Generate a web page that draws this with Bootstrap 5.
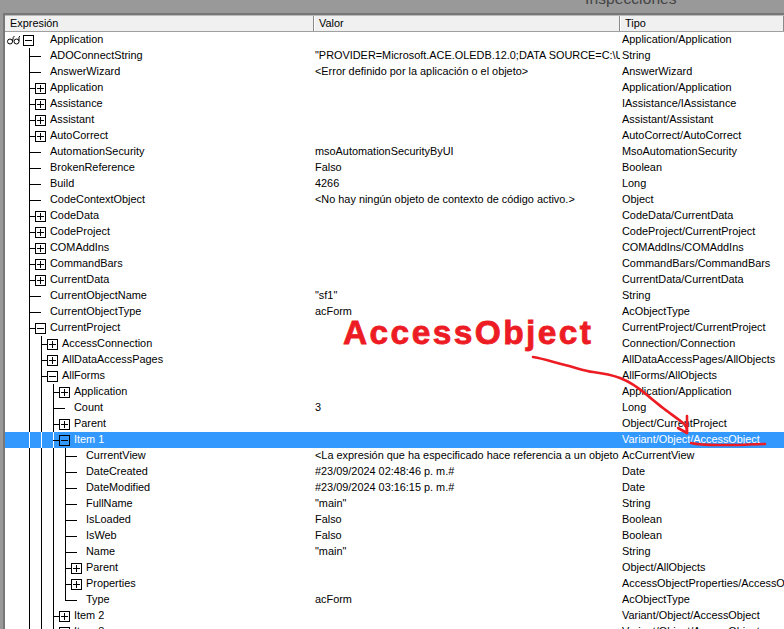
<!DOCTYPE html>
<html lang="es">
<head>
<meta charset="utf-8">
<title>Inspecciones</title>
<link href="https://cdn.jsdelivr.net/npm/bootstrap@5.3.0/dist/css/bootstrap.min.css" rel="stylesheet">
<style>
html,body{margin:0;background:#999;overflow:hidden}
.shot{width:784px;height:629px;font:10.9px/16px "Liberation Sans",Arial,sans-serif;color:#000}
.titlebar{height:13px;background:#999;flex:none;color:#444;font:15.5px/16px "Liberation Sans",sans-serif;padding-left:585px;letter-spacing:.1px}
.titlebar span{display:block;margin-top:-9px}
.pane{margin-left:3px;border-left:2px solid #777;border-top:2px solid #777;box-shadow:inset 0 1px 0 #bbb;padding-top:1px;background:#fff;min-height:0}
.head{height:16px;background:#f0f0f0;flex:none;border-bottom:1px solid #a0a0a0}
.hcell{height:15px;line-height:15px;padding-left:5px;border-right:1px solid #8a8a8a}
.hcell+.hcell{box-shadow:inset 1px 0 0 #fff}
.w1{width:309px;flex:none}.w2{width:306px;flex:none}.w3{flex:1 1 0;min-width:0}
.tr{height:16px;line-height:15px;flex:none;white-space:nowrap}
.v2{padding-left:1px;overflow:hidden}
.v3{padding-left:2px;overflow:hidden}
.sel{background:#3399ff;color:#fff}
.gap0{width:18px;flex:none}
.gd{width:12px;height:16px;flex:none;position:relative;display:block}
.gd::before{content:"";position:absolute;left:6px;top:0;bottom:0;width:1px;background:#000}
.sel .gd::before{background:#fff}
.el::after{content:"";position:absolute;left:6px;top:8px;width:6px;height:1px;background:#000}
.lst::before{bottom:8px}
.slot{width:15px;height:16px;flex:none;position:relative;display:block}
.lf::after{content:"";position:absolute;left:0;top:8px;width:6px;height:1px;background:#000}
.pb{position:absolute;left:0;top:3px;width:11px;height:11px;border:1px solid #000;background:#fff}
.pb::before{content:"";position:absolute;left:1px;right:1px;top:4px;height:1px;background:#000}
.pl::after{content:"";position:absolute;top:1px;bottom:1px;left:4px;width:1px;background:#000}
.sel .pb{background:#3399ff}
.rootslot{width:27px;height:16px;flex:none;position:relative;display:block}
.specs{position:absolute;left:2px;top:3px}
.mark-layer{position:absolute;left:0;top:0;pointer-events:none}
.note{position:absolute;left:343px;top:313px;font:700 33.5px/40px "Liberation Sans",Arial,sans-serif;color:#ed1c24;white-space:nowrap;letter-spacing:2.4px;-webkit-text-stroke:.8px #ed1c24}
</style>
</head>
<body>
<div class="shot d-flex flex-column position-relative overflow-hidden">
  <div class="titlebar overflow-hidden"><span>Inspecciones</span></div>
  <div class="pane flex-grow-1 overflow-hidden d-flex flex-column">
    <div class="head d-flex">
      <div class="hcell w1">Expresión</div>
      <div class="hcell w2">Valor</div>
      <div class="hcell w3">Tipo</div>
    </div>
    <div class="tr d-flex"><div class="w1 d-flex"><span class="gap0 position-relative"><svg class="specs" width="13" height="10" viewBox="0 0 13 10"><g fill="none" stroke="#000"><circle cx="3" cy="6.500" r="2.500"/><circle cx="9.500" cy="6.500" r="2.500"/><path d="M5.500 6.500Q6 1 7.500 1M12 6Q11.500 1 13 1"/></g></svg></span><span class="rootslot"><i class="pb"></i></span>Application</div><div class="w2 v2"></div><div class="w3 v3">Application/Application</div></div>
    <div class="tr d-flex"><div class="w1 d-flex"><i class="gap0"></i><i class="gd el"></i><span class="slot lf"></span>ADOConnectString</div><div class="w2 v2">"PROVIDER=Microsoft.ACE.OLEDB.12.0;DATA SOURCE=C:\Users\Usuario\Documents\main.accdb</div><div class="w3 v3">String</div></div>
    <div class="tr d-flex"><div class="w1 d-flex"><i class="gap0"></i><i class="gd el"></i><span class="slot lf"></span>AnswerWizard</div><div class="w2 v2">&lt;Error definido por la aplicación o el objeto&gt;</div><div class="w3 v3">AnswerWizard</div></div>
    <div class="tr d-flex"><div class="w1 d-flex"><i class="gap0"></i><i class="gd el"></i><span class="slot"><i class="pb pl"></i></span>Application</div><div class="w2 v2"></div><div class="w3 v3">Application/Application</div></div>
    <div class="tr d-flex"><div class="w1 d-flex"><i class="gap0"></i><i class="gd el"></i><span class="slot"><i class="pb pl"></i></span>Assistance</div><div class="w2 v2"></div><div class="w3 v3">IAssistance/IAssistance</div></div>
    <div class="tr d-flex"><div class="w1 d-flex"><i class="gap0"></i><i class="gd el"></i><span class="slot"><i class="pb pl"></i></span>Assistant</div><div class="w2 v2"></div><div class="w3 v3">Assistant/Assistant</div></div>
    <div class="tr d-flex"><div class="w1 d-flex"><i class="gap0"></i><i class="gd el"></i><span class="slot"><i class="pb pl"></i></span>AutoCorrect</div><div class="w2 v2"></div><div class="w3 v3">AutoCorrect/AutoCorrect</div></div>
    <div class="tr d-flex"><div class="w1 d-flex"><i class="gap0"></i><i class="gd el"></i><span class="slot lf"></span>AutomationSecurity</div><div class="w2 v2">msoAutomationSecurityByUI</div><div class="w3 v3">MsoAutomationSecurity</div></div>
    <div class="tr d-flex"><div class="w1 d-flex"><i class="gap0"></i><i class="gd el"></i><span class="slot lf"></span>BrokenReference</div><div class="w2 v2">Falso</div><div class="w3 v3">Boolean</div></div>
    <div class="tr d-flex"><div class="w1 d-flex"><i class="gap0"></i><i class="gd el"></i><span class="slot lf"></span>Build</div><div class="w2 v2">4266</div><div class="w3 v3">Long</div></div>
    <div class="tr d-flex"><div class="w1 d-flex"><i class="gap0"></i><i class="gd el"></i><span class="slot lf"></span>CodeContextObject</div><div class="w2 v2">&lt;No hay ningún objeto de contexto de código activo.&gt;</div><div class="w3 v3">Object</div></div>
    <div class="tr d-flex"><div class="w1 d-flex"><i class="gap0"></i><i class="gd el"></i><span class="slot"><i class="pb pl"></i></span>CodeData</div><div class="w2 v2"></div><div class="w3 v3">CodeData/CurrentData</div></div>
    <div class="tr d-flex"><div class="w1 d-flex"><i class="gap0"></i><i class="gd el"></i><span class="slot"><i class="pb pl"></i></span>CodeProject</div><div class="w2 v2"></div><div class="w3 v3">CodeProject/CurrentProject</div></div>
    <div class="tr d-flex"><div class="w1 d-flex"><i class="gap0"></i><i class="gd el"></i><span class="slot"><i class="pb pl"></i></span>COMAddIns</div><div class="w2 v2"></div><div class="w3 v3">COMAddIns/COMAddIns</div></div>
    <div class="tr d-flex"><div class="w1 d-flex"><i class="gap0"></i><i class="gd el"></i><span class="slot"><i class="pb pl"></i></span>CommandBars</div><div class="w2 v2"></div><div class="w3 v3">CommandBars/CommandBars</div></div>
    <div class="tr d-flex"><div class="w1 d-flex"><i class="gap0"></i><i class="gd el"></i><span class="slot"><i class="pb pl"></i></span>CurrentData</div><div class="w2 v2"></div><div class="w3 v3">CurrentData/CurrentData</div></div>
    <div class="tr d-flex"><div class="w1 d-flex"><i class="gap0"></i><i class="gd el"></i><span class="slot lf"></span>CurrentObjectName</div><div class="w2 v2">"sf1"</div><div class="w3 v3">String</div></div>
    <div class="tr d-flex"><div class="w1 d-flex"><i class="gap0"></i><i class="gd el"></i><span class="slot lf"></span>CurrentObjectType</div><div class="w2 v2">acForm</div><div class="w3 v3">AcObjectType</div></div>
    <div class="tr d-flex"><div class="w1 d-flex"><i class="gap0"></i><i class="gd el"></i><span class="slot"><i class="pb"></i></span>CurrentProject</div><div class="w2 v2"></div><div class="w3 v3">CurrentProject/CurrentProject</div></div>
    <div class="tr d-flex"><div class="w1 d-flex"><i class="gap0"></i><i class="gd"></i><i class="gd el"></i><span class="slot"><i class="pb pl"></i></span>AccessConnection</div><div class="w2 v2"></div><div class="w3 v3">Connection/Connection</div></div>
    <div class="tr d-flex"><div class="w1 d-flex"><i class="gap0"></i><i class="gd"></i><i class="gd el"></i><span class="slot"><i class="pb pl"></i></span>AllDataAccessPages</div><div class="w2 v2"></div><div class="w3 v3">AllDataAccessPages/AllObjects</div></div>
    <div class="tr d-flex"><div class="w1 d-flex"><i class="gap0"></i><i class="gd"></i><i class="gd el"></i><span class="slot"><i class="pb"></i></span>AllForms</div><div class="w2 v2"></div><div class="w3 v3">AllForms/AllObjects</div></div>
    <div class="tr d-flex"><div class="w1 d-flex"><i class="gap0"></i><i class="gd"></i><i class="gd"></i><i class="gd el"></i><span class="slot"><i class="pb pl"></i></span>Application</div><div class="w2 v2"></div><div class="w3 v3">Application/Application</div></div>
    <div class="tr d-flex"><div class="w1 d-flex"><i class="gap0"></i><i class="gd"></i><i class="gd"></i><i class="gd el"></i><span class="slot lf"></span>Count</div><div class="w2 v2">3</div><div class="w3 v3">Long</div></div>
    <div class="tr d-flex"><div class="w1 d-flex"><i class="gap0"></i><i class="gd"></i><i class="gd"></i><i class="gd el"></i><span class="slot"><i class="pb pl"></i></span>Parent</div><div class="w2 v2"></div><div class="w3 v3">Object/CurrentProject</div></div>
    <div class="tr d-flex sel"><div class="w1 d-flex"><i class="gap0"></i><i class="gd"></i><i class="gd"></i><i class="gd el"></i><span class="slot"><i class="pb"></i></span>Item 1</div><div class="w2 v2"></div><div class="w3 v3">Variant/Object/AccessObject</div></div>
    <div class="tr d-flex"><div class="w1 d-flex"><i class="gap0"></i><i class="gd"></i><i class="gd"></i><i class="gd"></i><i class="gd el"></i><span class="slot lf"></span>CurrentView</div><div class="w2 v2">&lt;La expresión que ha especificado hace referencia a un objeto cerrado o inexistente.&gt;</div><div class="w3 v3">AcCurrentView</div></div>
    <div class="tr d-flex"><div class="w1 d-flex"><i class="gap0"></i><i class="gd"></i><i class="gd"></i><i class="gd"></i><i class="gd el"></i><span class="slot lf"></span>DateCreated</div><div class="w2 v2">#23/09/2024 02:48:46 p. m.#</div><div class="w3 v3">Date</div></div>
    <div class="tr d-flex"><div class="w1 d-flex"><i class="gap0"></i><i class="gd"></i><i class="gd"></i><i class="gd"></i><i class="gd el"></i><span class="slot lf"></span>DateModified</div><div class="w2 v2">#23/09/2024 03:16:15 p. m.#</div><div class="w3 v3">Date</div></div>
    <div class="tr d-flex"><div class="w1 d-flex"><i class="gap0"></i><i class="gd"></i><i class="gd"></i><i class="gd"></i><i class="gd el"></i><span class="slot lf"></span>FullName</div><div class="w2 v2">"main"</div><div class="w3 v3">String</div></div>
    <div class="tr d-flex"><div class="w1 d-flex"><i class="gap0"></i><i class="gd"></i><i class="gd"></i><i class="gd"></i><i class="gd el"></i><span class="slot lf"></span>IsLoaded</div><div class="w2 v2">Falso</div><div class="w3 v3">Boolean</div></div>
    <div class="tr d-flex"><div class="w1 d-flex"><i class="gap0"></i><i class="gd"></i><i class="gd"></i><i class="gd"></i><i class="gd el"></i><span class="slot lf"></span>IsWeb</div><div class="w2 v2">Falso</div><div class="w3 v3">Boolean</div></div>
    <div class="tr d-flex"><div class="w1 d-flex"><i class="gap0"></i><i class="gd"></i><i class="gd"></i><i class="gd"></i><i class="gd el"></i><span class="slot lf"></span>Name</div><div class="w2 v2">"main"</div><div class="w3 v3">String</div></div>
    <div class="tr d-flex"><div class="w1 d-flex"><i class="gap0"></i><i class="gd"></i><i class="gd"></i><i class="gd"></i><i class="gd el"></i><span class="slot"><i class="pb pl"></i></span>Parent</div><div class="w2 v2"></div><div class="w3 v3">Object/AllObjects</div></div>
    <div class="tr d-flex"><div class="w1 d-flex"><i class="gap0"></i><i class="gd"></i><i class="gd"></i><i class="gd"></i><i class="gd el"></i><span class="slot"><i class="pb pl"></i></span>Properties</div><div class="w2 v2"></div><div class="w3 v3">AccessObjectProperties/AccessObjectProperty</div></div>
    <div class="tr d-flex"><div class="w1 d-flex"><i class="gap0"></i><i class="gd"></i><i class="gd"></i><i class="gd"></i><i class="gd el lst"></i><span class="slot lf"></span>Type</div><div class="w2 v2">acForm</div><div class="w3 v3">AcObjectType</div></div>
    <div class="tr d-flex"><div class="w1 d-flex"><i class="gap0"></i><i class="gd"></i><i class="gd"></i><i class="gd el"></i><span class="slot"><i class="pb pl"></i></span>Item 2</div><div class="w2 v2"></div><div class="w3 v3">Variant/Object/AccessObject</div></div>
    <div class="tr d-flex"><div class="w1 d-flex"><i class="gap0"></i><i class="gd"></i><i class="gd"></i><i class="gd el"></i><span class="slot"><i class="pb pl"></i></span>Item 3</div><div class="w2 v2"></div><div class="w3 v3">Variant/Object/AccessObject</div></div>
  </div>
  <div class="note">AccessObject</div>
  <svg class="mark-layer" width="784" height="629" viewBox="0 0 784 629">
    <g fill="none" stroke="#ed1c24" stroke-width="2.600" stroke-linecap="round" stroke-linejoin="round">
      <path d="M533 357C545 359 553 362 565 365S585 371 593 372 612 375 620 378 640 389 647 395 658 404 663 408 677 418 683 423 686 430 687 433"/>
      <path d="M687 416L687 433L678 428"/>
      <path d="M691 443C700 445 710 445 717 445S730 445 737 445 755 444 765 444"/>
    </g>
  </svg>
</div>
</body>
</html>
